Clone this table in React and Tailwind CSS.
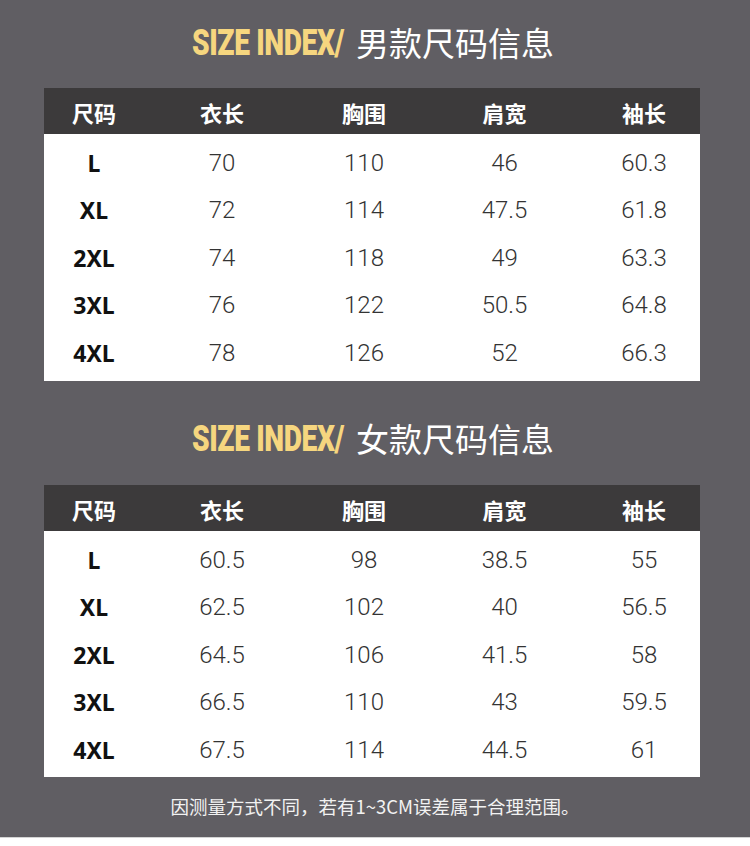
import React from 'react';

const HEAD = ['尺码', '衣长', '胸围', '肩宽', '袖长'];

const MEN = [
    ['L', '70', '110', '46', '60.3'],
    ['XL', '72', '114', '47.5', '61.8'],
    ['2XL', '74', '118', '49', '63.3'],
    ['3XL', '76', '122', '50.5', '64.8'],
    ['4XL', '78', '126', '52', '66.3'],
];

const WOMEN = [
    ['L', '60.5', '98', '38.5', '55'],
    ['XL', '62.5', '102', '40', '56.5'],
    ['2XL', '64.5', '106', '41.5', '58'],
    ['3XL', '66.5', '110', '43', '59.5'],
    ['4XL', '67.5', '114', '44.5', '61'],
];

const COLS = 'grid grid-cols-[100px_156px_128px_153px_1fr]';
const CJK = "font-['Noto_Sans_CJK_SC','Noto_Sans',sans-serif]";

function Title({ label }) {
    return (
        <div className="flex items-center h-[40px] pl-[192px]">
            <div className="w-[152px] h-[40px] overflow-visible flex items-center">
                <span className="inline-block whitespace-nowrap origin-left scale-x-[0.83] scale-y-[1.06] font-['Roboto','Liberation_Sans',sans-serif] font-black text-[34px] leading-[40px] text-[#f6d67f] tracking-[-0.5px]">
                    SIZE INDEX/
                </span>
            </div>
            <span className={`ml-[12px] ${CJK} text-[33px] leading-[40px] text-white font-normal`}>{label}</span>
        </div>
    );
}

function SizeTable({ rows, bodyH }) {
    return (
        <div className="mx-[44px] w-[656px]">
            <div className={`${COLS} h-[46px] bg-[#3c3a3b] items-center pt-[3px]`}>
                {HEAD.map((h, i) => (
                    <div key={h} className={`text-center text-white font-bold text-[22px] ${CJK} ${i === 4 ? 'pl-[7px]' : ''}`}>{h}</div>
                ))}
            </div>
            <div className="bg-white pt-[5px]" style={{ height: bodyH }}>
                {rows.map(r => (
                    <div key={r[0]} className={`${COLS} h-[47.5px] items-center`}>
                        {r.map((v, i) => (
                            <div
                                key={i}
                                className={`text-center ${i === 0 ? "font-bold text-[#111] font-['Noto_Sans',sans-serif] text-[23px]" : "font-light text-[#333] font-['Roboto','Noto_Sans',sans-serif] text-[24px]"} ${i === 4 ? 'pl-[7px]' : ''}`}
                            >
                                {v}
                            </div>
                        ))}
                    </div>
                ))}
            </div>
        </div>
    );
}

export default function App() {
    return (
        <div className="w-[750px] min-h-[846px] bg-white">
            <div className="bg-[#605e63] pt-[22px] pb-[19px]">
                <Title label="男款尺码信息" />
                <div className="mt-[26px]">
                    <SizeTable rows={MEN} bodyH={247} />
                </div>
                <div className="mt-[37px]">
                    <Title label="女款尺码信息" />
                </div>
                <div className="mt-[27px]">
                    <SizeTable rows={WOMEN} bodyH={246} />
                </div>
                <div className={`mt-[17px] text-center text-[18.5px] leading-[24px] text-[#f2f2f2] ${CJK}`}>
                    因测量方式不同，若有1~3CM误差属于合理范围。
                </div>
            </div>
            <div className="h-[9px] border-t border-[#d4d4d4] bg-white" />
        </div>
    );
}
